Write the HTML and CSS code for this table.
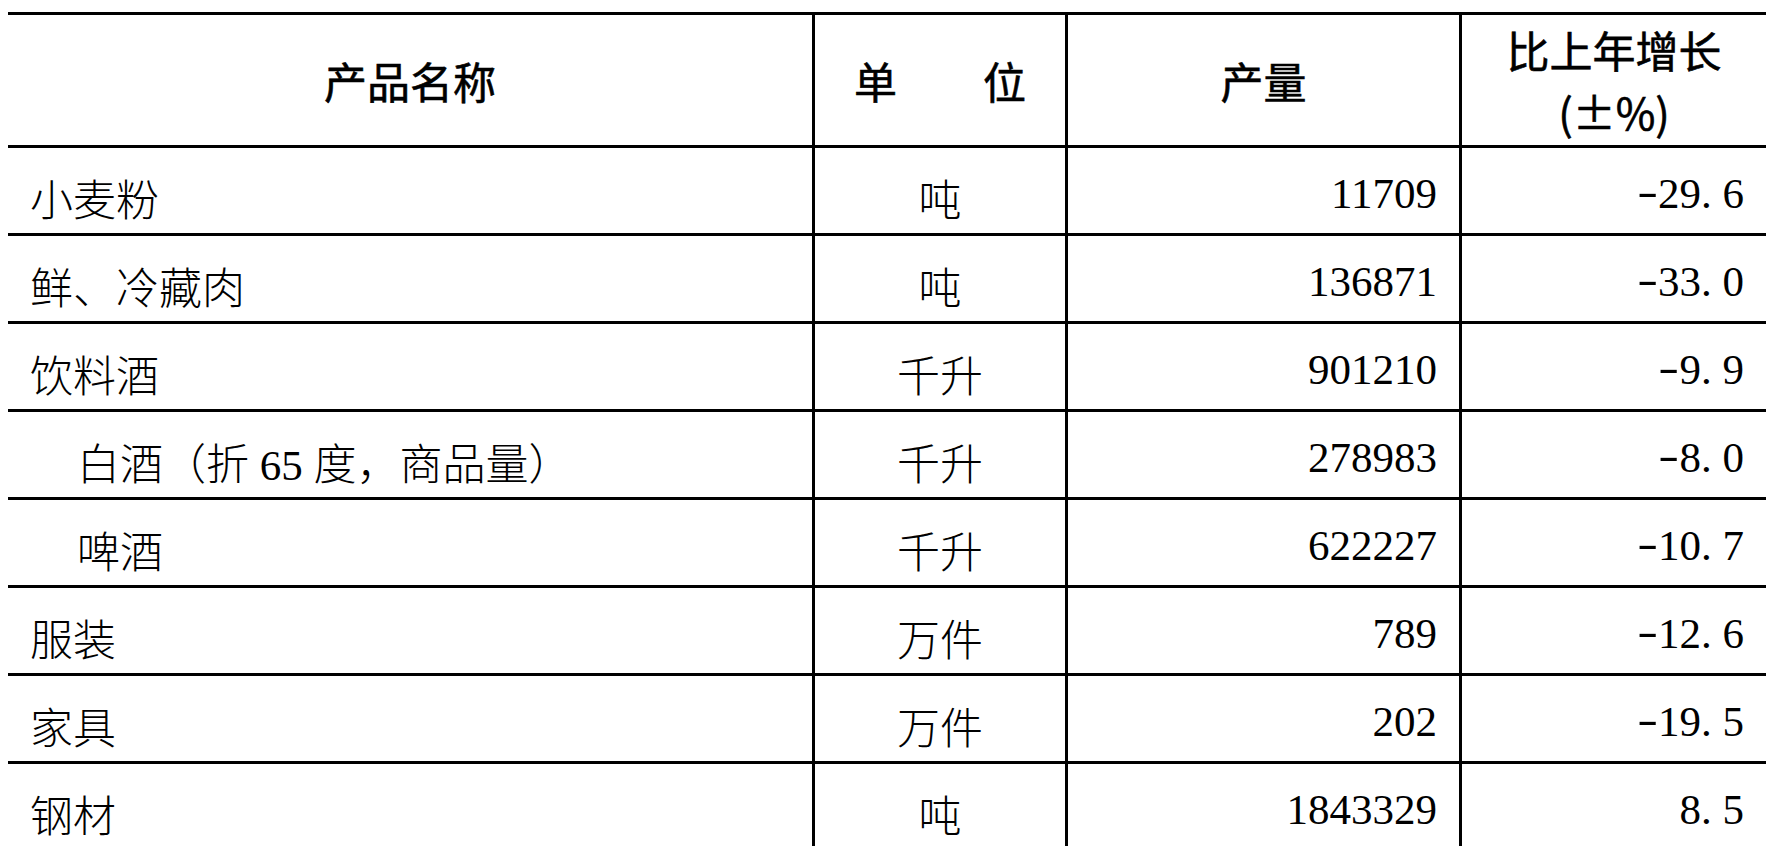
FILE: index.html
```html
<!DOCTYPE html>
<html lang="zh-CN">
<head>
<meta charset="utf-8">
<title>主要工业产品产量</title>
<link rel="stylesheet" href="styles.css">
</head>
<body>
<table class="stats">
  <colgroup>
    <col class="c-name">
    <col class="c-unit">
    <col class="c-qty">
    <col class="c-chg">
  </colgroup>
  <thead>
    <tr class="head-row">
      <th>产品名称</th>
      <th>单　　位</th>
      <th>产量</th>
      <th>比上年增长<br>(±%)</th>
    </tr>
  </thead>
  <tbody>
    <tr><td class="name">小麦粉</td><td class="unit">吨</td><td class="num">11709</td><td class="num"><span class="neg">-</span>29<span class="pt">.</span>6</td></tr>
    <tr><td class="name">鲜、冷藏肉</td><td class="unit">吨</td><td class="num">136871</td><td class="num"><span class="neg">-</span>33<span class="pt">.</span>0</td></tr>
    <tr><td class="name">饮料酒</td><td class="unit">千升</td><td class="num">901210</td><td class="num"><span class="neg">-</span>9<span class="pt">.</span>9</td></tr>
    <tr><td class="name sub">白酒（折 65 度，商品量）</td><td class="unit">千升</td><td class="num">278983</td><td class="num"><span class="neg">-</span>8<span class="pt">.</span>0</td></tr>
    <tr><td class="name sub">啤酒</td><td class="unit">千升</td><td class="num">622227</td><td class="num"><span class="neg">-</span>10<span class="pt">.</span>7</td></tr>
    <tr><td class="name">服装</td><td class="unit">万件</td><td class="num">789</td><td class="num"><span class="neg">-</span>12<span class="pt">.</span>6</td></tr>
    <tr><td class="name">家具</td><td class="unit">万件</td><td class="num">202</td><td class="num"><span class="neg">-</span>19<span class="pt">.</span>5</td></tr>
    <tr><td class="name">钢材</td><td class="unit">吨</td><td class="num">1843329</td><td class="num">8<span class="pt">.</span>5</td></tr>
  </tbody>
</table>
</body>
</html>
```

FILE: styles.css
```css
html, body {
  margin: 0;
  padding: 0;
  background: #ffffff;
  overflow: hidden;
}

.stats {
  margin: 12px 0 0 8px;
  width: 1758px;
  table-layout: fixed;
  border-collapse: separate;
  border-spacing: 0;
  border-top: 3px solid #000;
  color: #000;
  font-family: "Liberation Serif", "Noto Sans CJK SC", serif;
  font-size: 43px;
}

.c-name { width: 804px; }
.c-unit { width: 253px; }
.c-qty  { width: 394px; }
.c-chg  { width: 307px; }

.stats th,
.stats td {
  padding: 0;
  border-bottom: 3px solid #000;
  overflow: hidden;
  white-space: nowrap;
}

.stats th + th,
.stats td + td {
  border-left: 3px solid #000;
}

.head-row {
  height: 133px;
}

.stats th {
  font-family: "Noto Sans CJK SC", sans-serif;
  font-weight: 400;
  text-align: center;
  vertical-align: middle;
  line-height: 62px;
  -webkit-text-stroke: 0.6px #000;
}

.stats tbody tr {
  height: 88px;
}

.stats td {
  font-weight: 300;
  line-height: 48px;
  vertical-align: middle;
  padding-top: 22px;
}

.name {
  text-align: left;
  padding-left: 22px !important;
}

.name.sub {
  padding-left: 69px !important;
}

.unit {
  text-align: center;
}

.stats td.num {
  text-align: right;
  padding-right: 22px;
  padding-top: 6px;
}

.neg {
  display: inline-block;
  width: 0.5em;
  text-align: center;
  transform: translateY(-0.07em) scaleX(1.45);
}

.pt {
  letter-spacing: 0.25em;
}
```
